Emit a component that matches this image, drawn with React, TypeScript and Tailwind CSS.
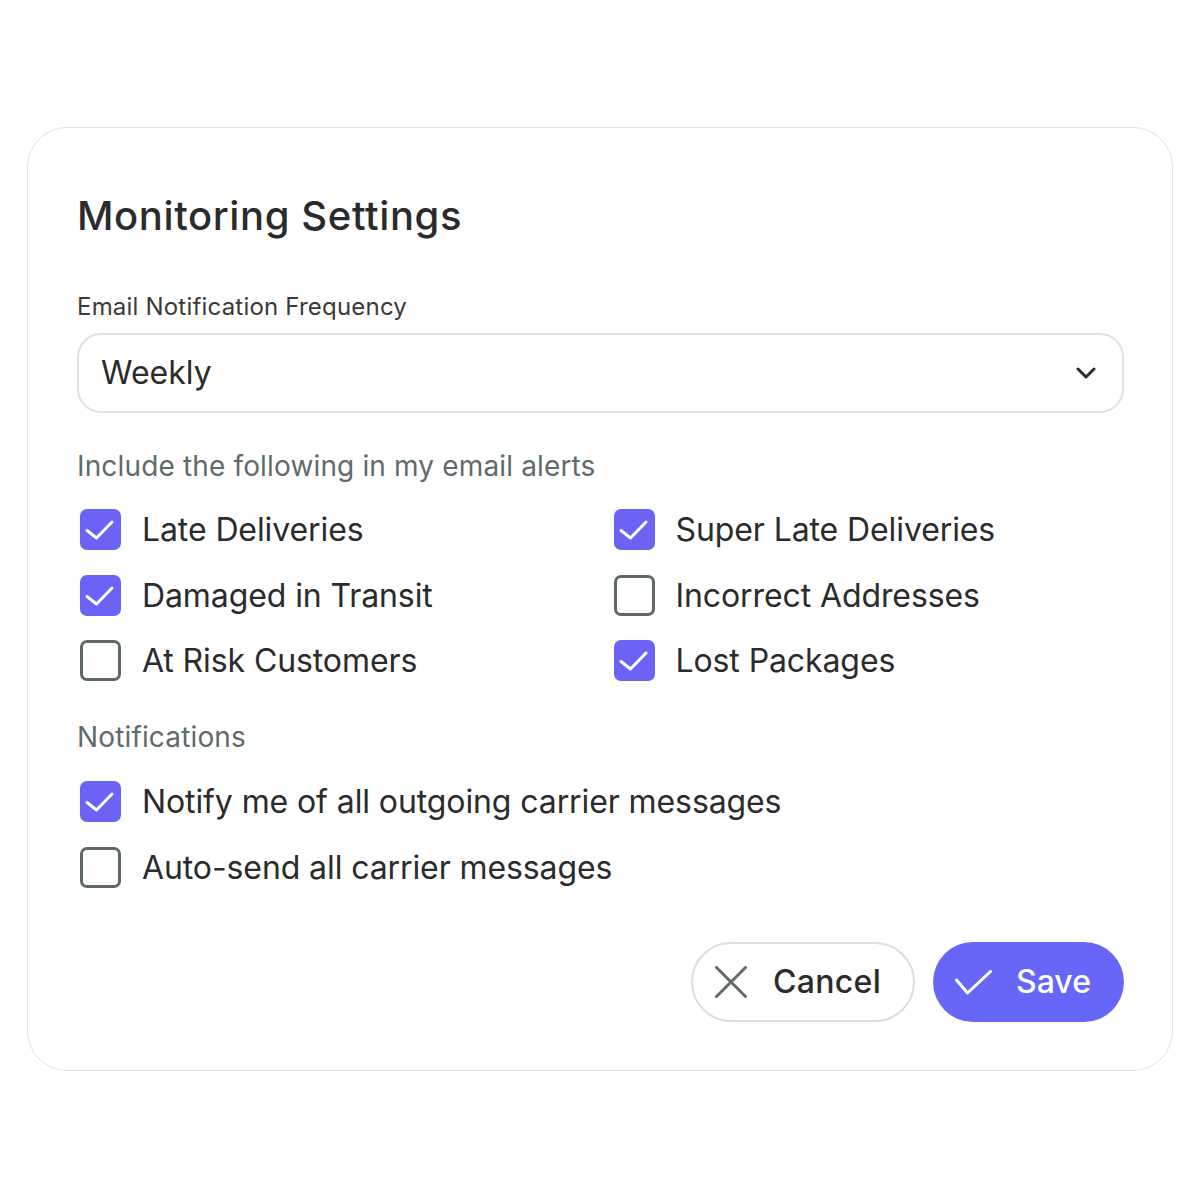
import React from "react";

const font = { fontFamily: "Inter, 'Noto Sans', sans-serif" };

const CheckMark = () => (
  <svg width="41" height="41" viewBox="0 0 41 41" fill="none" aria-hidden="true">
    <path
      d="M7 21.5 16.5 29 32 13"
      stroke="white"
      strokeWidth="3"
      strokeLinecap="round"
      strokeLinejoin="round"
    />
  </svg>
);

const Checkbox = ({ checked }: { checked: boolean }) =>
  checked ? (
    <div className="size-[41px] shrink-0 rounded-[7px] bg-[#6a63f6]">
      <CheckMark />
    </div>
  ) : (
    <div className="size-[41px] shrink-0 rounded-[7px] border-[3px] border-[#5e6868] bg-white" />
  );

const Option = ({ label, checked }: { label: string; checked: boolean }) => (
  <label className="flex h-[41px] items-center gap-[21px] pl-[3px]">
    <Checkbox checked={checked} />
    <span className="text-[32px] leading-[41px] tracking-[-0.1px] text-[#2b2b2b]">{label}</span>
  </label>
);

export default function App() {
  return (
    <div className="min-h-[1200px] bg-white pt-[127px]" style={font}>
      <div className="mx-[27px] h-[944px] rounded-[40px] border border-[#e4e1da] bg-white pr-[48px] pl-[49px] pt-[64px]">
        <h1 className="text-[40px] leading-[48px] font-medium tracking-[0.6px] text-[#2b2b2b]">
          Monitoring Settings
        </h1>

        <div className="mt-[52px] text-[24px] leading-[30px] tracking-[0.2px] text-[#3a3a3a]">
          Email Notification Frequency
        </div>
        <div className="mt-[11px] flex h-[80px] items-center justify-between rounded-[24px] border-2 border-[#e4e1da] pr-[26px] pl-[22px]">
          <span className="text-[32px] text-[#2b2b2b]">Weekly</span>
          <svg width="20" height="14" viewBox="0 0 20 14" fill="none" aria-hidden="true">
            <path d="M2 3 10 11 18 3" stroke="#2b2b2b" strokeWidth="3" strokeLinecap="round" strokeLinejoin="round" />
          </svg>
        </div>

        <div className="mt-[36px] text-[28px] leading-[34px] tracking-[0.15px] text-[#5f6b6b]">
          Include the following in my email alerts
        </div>
        <div className="mt-[26px] grid grid-cols-2 gap-y-[24.5px]">
          <Option label="Late Deliveries" checked />
          <div className="pl-[10px]">
            <Option label="Super Late Deliveries" checked />
          </div>
          <Option label="Damaged in Transit" checked />
          <div className="pl-[10px]">
            <Option label="Incorrect Addresses" checked={false} />
          </div>
          <Option label="At Risk Customers" checked={false} />
          <div className="pl-[10px]">
            <Option label="Lost Packages" checked />
          </div>
        </div>

        <div className="mt-[39px] text-[28px] leading-[34px] tracking-[0.15px] text-[#5f6b6b]">
          Notifications
        </div>
        <div className="mt-[27px] flex flex-col gap-y-[25px]">
          <Option label="Notify me of all outgoing carrier messages" checked />
          <Option label="Auto-send all carrier messages" checked={false} />
        </div>

        <div className="mt-[54px] flex justify-end gap-[18px]">
          <button className="flex h-[80px] w-[224px] items-center gap-[26px] rounded-full border-2 border-[#e0ddd6] bg-white pl-[22px]">
            <svg width="32" height="32" viewBox="0 0 32 32" fill="none" aria-hidden="true">
              <path d="M1.5 1.5 30.5 30.5M30.5 1.5 1.5 30.5" stroke="#5f6b6b" strokeWidth="3" strokeLinecap="round" />
            </svg>
            <span className="text-[32px] font-medium tracking-[0.3px] text-[#2b2b2b]">Cancel</span>
          </button>
          <button className="flex h-[80px] w-[191px] items-center gap-[24px] rounded-full bg-[#6866f8] pl-[22px]">
            <svg width="37" height="25" viewBox="0 0 37 25" fill="none" aria-hidden="true">
              <path d="M1.5 10 12.5 23 35.5 1.5" stroke="white" strokeWidth="3" strokeLinecap="round" strokeLinejoin="round" />
            </svg>
            <span className="text-[32px] font-medium text-white">Save</span>
          </button>
        </div>
      </div>
    </div>
  );
}
